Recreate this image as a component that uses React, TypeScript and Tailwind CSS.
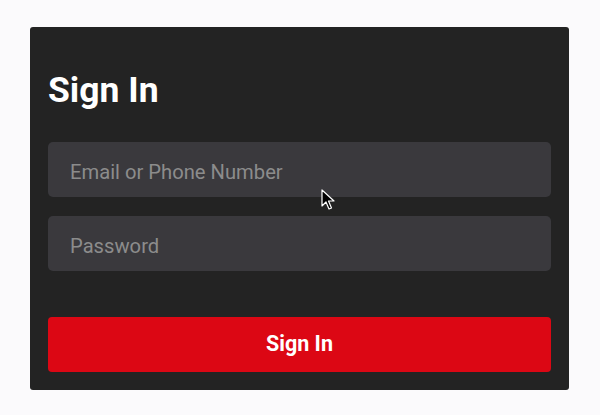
import React from "react";

export default function App() {
  return (
    <div className="w-[600px] h-[415px] bg-[#fbfafc] pt-[27px] pl-[30px]" style={{ fontFamily: "Roboto, 'Noto Sans', sans-serif" }}>
      <div className="relative w-[539px] h-[363px] bg-[#232323] rounded-[3px] px-[18px] pt-[43px]">
        <h1 className="text-white font-bold text-[35.5px] leading-[40px]">Sign In</h1>
        <div className="mt-[32px] flex flex-col gap-[19px]">
          <div className="h-[55px] rounded-[5px] bg-[#3a393d] flex items-center px-[22px] pt-[6px] text-[20.2px] text-[#8c8c8c]">
            Email or Phone Number
          </div>
          <div className="h-[55px] rounded-[5px] bg-[#3a393d] flex items-center px-[22px] pt-[5px] text-[20.2px] text-[#8c8c8c]">
            Password
          </div>
        </div>
        <button className="mt-[46px] w-full h-[55px] rounded-[4px] bg-[#dc0714] text-white font-bold text-[21.5px] flex items-center justify-center">
          Sign In
        </button>
        <svg className="absolute left-[291px] top-[162px]" width="14" height="22" viewBox="0 0 14 22">
          <path d="M1 1 L1 17 L5 13 L8 20 L10.5 19 L7.5 12 L13 12 Z" fill="#000" stroke="#fff" strokeWidth="1.2" strokeLinejoin="round" />
        </svg>
      </div>
    </div>
  );
}
